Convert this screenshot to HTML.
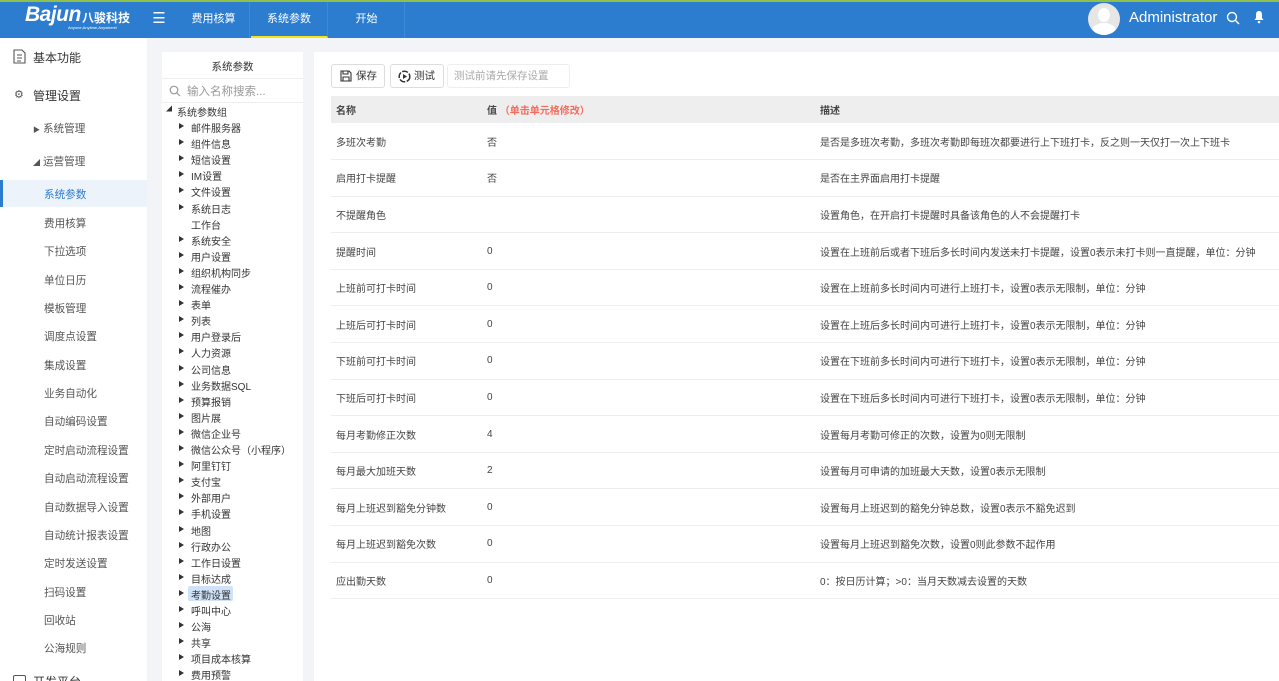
<!DOCTYPE html>
<html style="overflow:hidden"><head><meta charset="utf-8">
<style>
*{margin:0;padding:0;box-sizing:border-box}
html,body{overflow:hidden}
body{width:1279px;height:681px;background:#f3f4f8;font-family:"Liberation Sans","Noto Sans CJK SC",sans-serif;color:#333;position:relative}
.top{position:absolute;left:0;top:0;width:1279px;height:38px;background:#2c7dd0;border-top:2px solid #8fc04a}
.top .nav{position:absolute;top:0;height:36px;line-height:34px;color:#fff;font-size:11px;text-align:center}
.side{position:absolute;left:0;top:38px;width:147px;height:643px;background:#fff;overflow:hidden}
.side div{position:absolute;font-size:10.6px;color:#555;white-space:nowrap}
.tree{position:absolute;left:162px;top:52px;width:141px;height:629px;background:#fff;overflow:hidden}
.tree .it{position:absolute;left:29px;font-size:10px;color:#333;white-space:nowrap}
.tree .ar{position:absolute;left:17px;width:0;height:0;border-left:5px solid #333;border-top:3.5px solid transparent;border-bottom:3.5px solid transparent}
.main{position:absolute;left:314px;top:52px;width:965px;height:629px;background:#fff;overflow:hidden}
.btn{position:absolute;top:12px;height:24px;border:1px solid #ddd;border-radius:3px;font-size:10.5px;line-height:22px;color:#333;background:#fff}
table{position:absolute;left:17px;top:44px;width:948px;border-collapse:collapse;font-size:10px;table-layout:fixed}
th{background:#eee;height:27px;text-align:left;font-weight:bold;color:#444;padding-left:5px}
td{height:36.6px;border-bottom:1px solid #eee;padding-left:5px;color:#444;white-space:nowrap;overflow:hidden}
</style></head><body>
<div class="top">
 <div style="position:absolute;left:25px;top:1px;color:#fff;font-style:italic;font-weight:bold;font-size:21px;letter-spacing:-0.5px">Bajun</div>
 <div style="position:absolute;left:82px;top:7px;color:#fff;font-weight:bold;font-size:12px">八骏科技</div>
 <div style="position:absolute;left:68px;top:23px;color:#fff;font-size:4px">Anyone,Anytime,Anywhere!</div>
 <div class="nav" style="left:150px;width:18px;font-size:15px">☰</div>
 <div class="nav" style="left:178px;width:72px;border-right:1px solid #3f8ad8">费用核算</div>
 <div class="nav" style="left:251px;width:77px;border-bottom:2px solid #f2e51c;border-right:1px solid #3f8ad8">系统参数</div>
 <div class="nav" style="left:329px;width:76px;border-right:1px solid #3f8ad8">开始</div>
 <div style="position:absolute;left:1088px;top:1px;width:32px;height:32px;border-radius:50%;background:#e6e6e6;overflow:hidden"><div style="position:absolute;left:10px;top:5px;width:12px;height:14px;border-radius:50%;background:#fff"></div><div style="position:absolute;left:4px;top:20px;width:24px;height:16px;border-radius:50%;background:#fff"></div></div>
 <div style="position:absolute;left:1129px;top:7px;color:#fff;font-size:15px">Administrator</div>
 <svg style="position:absolute;left:1226px;top:9px" width="14" height="14" viewBox="0 0 14 14"><circle cx="6" cy="6" r="4.5" fill="none" stroke="#fff" stroke-width="1.4"/><line x1="9.3" y1="9.3" x2="13" y2="13" stroke="#fff" stroke-width="1.4"/></svg>
 <svg style="position:absolute;left:1253px;top:8px" width="12" height="14" viewBox="0 0 12 14"><path d="M6 1C3.5 1 3 3 3 5V8L1.5 10H10.5L9 8V5C9 3 8.5 1 6 1Z" fill="#fff"/><circle cx="6" cy="12" r="1.3" fill="#fff"/></svg>
</div>
<div class="side">
 <svg style="position:absolute;left:13px;top:11px" width="13" height="15" viewBox="0 0 13 15"><path d="M1 1H9L12 4V14H1Z M4 6H9 M4 9H9 M4 12H8" fill="none" stroke="#555" stroke-width="1.1"/></svg>
 <div style="left:33px;top:11px;font-size:12px;color:#333">基本功能</div>
 <div style="left:14px;top:50px;font-size:11px">⚙</div>
 <div style="left:33px;top:49px;font-size:12px;color:#333">管理设置</div>
 <div style="left:33px;top:83px"><span style="font-size:7px">▶</span> 系统管理</div>
 <div style="left:33px;top:116px"><span style="font-size:7px">◢</span> 运营管理</div>
 <div style="left:0;top:142px;width:147px;height:27px;background:#edf3fb;border-left:3px solid #2c7dd0"></div>
 <div style="left:44px;top:149px;color:#2c7dd0">系统参数</div>
 <div style="left:44px;top:178px">费用核算</div>
 <div style="left:44px;top:206px">下拉选项</div>
 <div style="left:44px;top:235px">单位日历</div>
 <div style="left:44px;top:263px">模板管理</div>
 <div style="left:44px;top:291px">调度点设置</div>
 <div style="left:44px;top:320px">集成设置</div>
 <div style="left:44px;top:348px">业务自动化</div>
 <div style="left:44px;top:376px">自动编码设置</div>
 <div style="left:44px;top:405px">定时启动流程设置</div>
 <div style="left:44px;top:433px">自动启动流程设置</div>
 <div style="left:44px;top:462px">自动数据导入设置</div>
 <div style="left:44px;top:490px">自动统计报表设置</div>
 <div style="left:44px;top:518px">定时发送设置</div>
 <div style="left:44px;top:547px">扫码设置</div>
 <div style="left:44px;top:575px">回收站</div>
 <div style="left:44px;top:603px">公海规则</div>
 <div style="left:13px;top:637px;width:13px;height:10px;border:1px solid #555;border-radius:2px"></div>
 <div style="left:33px;top:635px;font-size:12px;color:#333">开发平台</div>
</div>
<div class="tree">
 <div style="position:absolute;left:0;top:7px;width:141px;text-align:center;font-size:10.5px;color:#333">系统参数</div>
 <div style="position:absolute;left:0;top:26px;width:141px;border-top:1px solid #eee"></div>
 <svg style="position:absolute;left:7px;top:33px" width="12" height="12" viewBox="0 0 12 12"><circle cx="5" cy="5" r="3.8" fill="none" stroke="#999" stroke-width="1.2"/><line x1="7.7" y1="7.7" x2="11" y2="11" stroke="#999" stroke-width="1.2"/></svg>
 <div style="position:absolute;left:25px;top:31px;font-size:11.5px;color:#999">输入名称搜索...</div>
 <div style="position:absolute;left:0;top:50px;width:141px;border-top:1px solid #eee"></div>
 <div style="position:absolute;left:4px;top:52px;font-size:6px;color:#333">◢</div>
 <div class="it" style="left:15px;top:52px">系统参数组</div>
</div>
<div class="main">
 <div class="btn" style="left:17px;width:54px"><svg style="position:absolute;left:8px;top:5px" width="12" height="12" viewBox="0 0 12 12"><path d="M1 1H9L11 3V11H1Z M3 1V4H8V1 M3 11V7H9V11" fill="none" stroke="#333" stroke-width="1.1"/></svg><span style="position:absolute;left:24px">保存</span></div>
 <div class="btn" style="left:76px;width:54px"><svg style="position:absolute;left:7px;top:5px" width="13" height="13" viewBox="0 0 13 13"><circle cx="6.5" cy="6.5" r="5.3" fill="none" stroke="#333" stroke-width="1.5" stroke-dasharray="6 1.5"/><path d="M5 4L9 6.5L5 9Z" fill="#333"/></svg><span style="position:absolute;left:23px">测试</span></div>
 <div class="btn" style="left:133px;width:123px;border-color:#eee;color:#aaa;padding-left:6px">测试前请先保存设置</div>
 <table>
  <colgroup><col style="width:151px"><col style="width:333px"><col></colgroup>
  <tr><th>名称</th><th>值 <span style="color:#f56c5b">（单击单元格修改）</span></th><th>描述</th></tr>
  <tr><td>多班次考勤</td><td>否</td><td>是否是多班次考勤，多班次考勤即每班次都要进行上下班打卡，反之则一天仅打一次上下班卡</td></tr>
  <tr><td>启用打卡提醒</td><td>否</td><td>是否在主界面启用打卡提醒</td></tr>
  <tr><td>不提醒角色</td><td></td><td>设置角色，在开启打卡提醒时具备该角色的人不会提醒打卡</td></tr>
  <tr><td>提醒时间</td><td>0</td><td>设置在上班前后或者下班后多长时间内发送未打卡提醒，设置0表示未打卡则一直提醒，单位：分钟</td></tr>
  <tr><td>上班前可打卡时间</td><td>0</td><td>设置在上班前多长时间内可进行上班打卡，设置0表示无限制，单位：分钟</td></tr>
  <tr><td>上班后可打卡时间</td><td>0</td><td>设置在上班后多长时间内可进行上班打卡，设置0表示无限制，单位：分钟</td></tr>
  <tr><td>下班前可打卡时间</td><td>0</td><td>设置在下班前多长时间内可进行下班打卡，设置0表示无限制，单位：分钟</td></tr>
  <tr><td>下班后可打卡时间</td><td>0</td><td>设置在下班后多长时间内可进行下班打卡，设置0表示无限制，单位：分钟</td></tr>
  <tr><td>每月考勤修正次数</td><td>4</td><td>设置每月考勤可修正的次数，设置为0则无限制</td></tr>
  <tr><td>每月最大加班天数</td><td>2</td><td>设置每月可申请的加班最大天数，设置0表示无限制</td></tr>
  <tr><td>每月上班迟到豁免分钟数</td><td>0</td><td>设置每月上班迟到的豁免分钟总数，设置0表示不豁免迟到</td></tr>
  <tr><td>每月上班迟到豁免次数</td><td>0</td><td>设置每月上班迟到豁免次数，设置0则此参数不起作用</td></tr>
  <tr><td>应出勤天数</td><td>0</td><td>0：按日历计算；&gt;0：当月天数减去设置的天数</td></tr>
 </table>
</div>
<script>
var items=["邮件服务器","组件信息","短信设置","IM设置","文件设置","系统日志","工作台","系统安全","用户设置","组织机构同步","流程催办","表单","列表","用户登录后","人力资源","公司信息","业务数据SQL","预算报销","图片展","微信企业号","微信公众号（小程序）","阿里钉钉","支付宝","外部用户","手机设置","地图","行政办公","工作日设置","目标达成","考勤设置","呼叫中心","公海","共享","项目成本核算","费用预警"];
var t=document.querySelector('.tree'),h='';
items.forEach(function(s,i){var y=68+i*16.1;
 if(s!="工作台")h+='<div class="ar" style="top:'+(y+3)+'px"></div>';
 if(s=="考勤设置")h+='<div style="position:absolute;left:26px;top:'+(y-1)+'px;width:45px;height:15px;background:#cfe2f7;border-radius:2px"></div>';
 h+='<div class="it" style="top:'+y+'px">'+s+'</div>';});
t.insertAdjacentHTML('beforeend',h);
</script>
</body></html>
